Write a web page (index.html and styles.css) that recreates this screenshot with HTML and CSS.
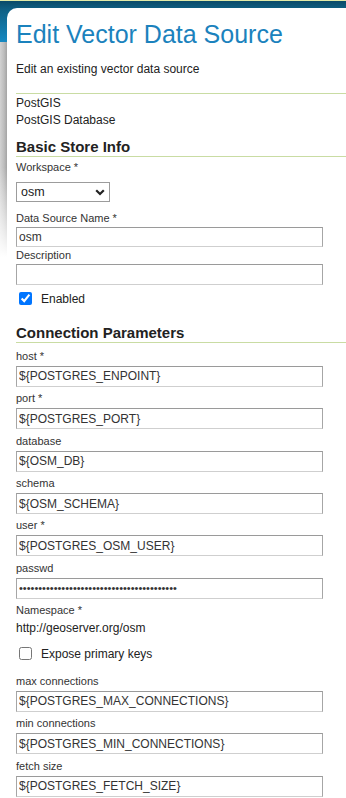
FILE: index.html
```html
<!DOCTYPE html>
<html lang="en">
<head>
<meta charset="utf-8">
<title>Edit Vector Data Source</title>
<link rel="stylesheet" href="styles.css">
</head>
<body>
<main class="panel">
  <h1 class="title">Edit Vector Data Source</h1>
  <p class="subtitle">Edit an existing vector data source</p>
  <div class="store-type">
    <div>PostGIS</div>
    <div>PostGIS Database</div>
  </div>

  <section class="group">
    <h2 class="group-title">Basic Store Info</h2>
    <label class="label label-first" for="ws">Workspace *</label>
    <div class="select-wrap">
      <select id="ws" class="select"><option>osm</option></select>
      <svg class="chevron" width="10" height="7" viewBox="0 0 10 7"><path d="M1.2 1.2 L5 5 L8.8 1.2" fill="none" stroke="#222" stroke-width="2.2"/></svg>
    </div>
    <label class="label label-dsn" for="dsn">Data Source Name *</label>
    <input id="dsn" class="text text-dsn" type="text" value="osm">
    <label class="label label-desc" for="desc">Description</label>
    <input id="desc" class="text text-desc" type="text" value="">
    <div class="check-row check-enabled">
      <input id="enabled" class="check" type="checkbox" checked>
      <label for="enabled" class="check-label">Enabled</label>
    </div>
  </section>

  <section class="group">
    <h2 class="group-title group-title-conn">Connection Parameters</h2>
    <div class="field field-first">
      <label class="label" for="host">host *</label>
      <input id="host" class="text" type="text" value="${POSTGRES_ENPOINT}">
    </div>
    <div class="field">
      <label class="label" for="port">port *</label>
      <input id="port" class="text" type="text" value="${POSTGRES_PORT}">
    </div>
    <div class="field">
      <label class="label" for="db">database</label>
      <input id="db" class="text" type="text" value="${OSM_DB}">
    </div>
    <div class="field">
      <label class="label" for="schema">schema</label>
      <input id="schema" class="text" type="text" value="${OSM_SCHEMA}">
    </div>
    <div class="field">
      <label class="label" for="user">user *</label>
      <input id="user" class="text" type="text" value="${POSTGRES_OSM_USER}">
    </div>
    <div class="field">
      <label class="label" for="pw">passwd</label>
      <input id="pw" class="text text-pw" type="password" value="00000000000000000000000000000000000000000">
    </div>
    <div class="field">
      <div class="label">Namespace *</div>
      <div class="ns-value">http://geoserver.org/osm</div>
    </div>
    <div class="check-row check-expose">
      <input id="expose" class="check" type="checkbox">
      <label for="expose" class="check-label">Expose primary keys</label>
    </div>
    <div class="field field-after-check">
      <label class="label" for="maxc">max connections</label>
      <input id="maxc" class="text" type="text" value="${POSTGRES_MAX_CONNECTIONS}">
    </div>
    <div class="field">
      <label class="label" for="minc">min connections</label>
      <input id="minc" class="text" type="text" value="${POSTGRES_MIN_CONNECTIONS}">
    </div>
    <div class="field">
      <label class="label" for="fetch">fetch size</label>
      <input id="fetch" class="text" type="text" value="${POSTGRES_FETCH_SIZE}">
    </div>
  </section>
</main>
</body>
</html>
```
FILE: styles.css
```css
html, body {
  margin: 0;
  padding: 0;
}

body {
  font-family: "Liberation Sans", Arial, sans-serif;
  color: #222;
  background-color: #fff;
  background-image:
    linear-gradient(to bottom, rgba(255,255,255,0) 0, rgba(255,255,255,0) 125px, #fff 215px),
    linear-gradient(to right, #d2d2d2 0, #bdbdbd 4px, #a4a4a4 7px),
    linear-gradient(to bottom, #e2eaa8 0, #e2eaa8 1px, #0a4a68 1px, #0f5f83 9px, #1689c2 42px);
  background-position: 0 42px, 0 42px, 0 0;
  background-size: 7px 220px, 7px 220px, 100% 42px;
  background-repeat: no-repeat;
  min-height: 798px;
}

.panel {
  display: block;
  margin: 8px 0 0 7px;
  padding: 11px 0 40px 9px;
  background: #fff;
  border-top-left-radius: 10px;
}

.title {
  margin: 0;
  font-size: 25px;
  line-height: 30px;
  font-weight: normal;
  color: #1b82bd;
  white-space: nowrap;
}

.subtitle {
  margin: 12.7px 0 0 0;
  font-size: 12px;
  line-height: 15px;
  padding-bottom: 16.3px;
  border-bottom: 1px solid #c9dca3;
}

.store-type {
  margin-top: 0.6px;
  font-size: 12px;
  line-height: 17px;
}

.group-title {
  margin: 9.5px 0 0 0;
  font-size: 15px;
  line-height: 18px;
  font-weight: bold;
  color: #222;
  border-bottom: 1px solid #c9dca3;
}

.group-title-conn {
  margin-top: 18.8px;
}

.label {
  display: block;
  font-size: 11px;
  line-height: 14px;
  color: #333;
}

.label-first {
  margin-top: 2.8px;
}

.label-dsn {
  margin-top: 8.9px;
}

.label-desc {
  margin-top: 1.2px;
}

.select-wrap {
  position: relative;
  width: 94px;
  height: 20px;
  margin-top: 8.1px;
}

.select {
  appearance: none;
  -webkit-appearance: none;
  box-sizing: border-box;
  display: block;
  width: 94px;
  height: 20px;
  margin: 0;
  padding: 0 0 0 4px;
  border: 1px solid #9c9c9c;
  border-radius: 0;
  background: #fff;
  font-family: "Liberation Sans", Arial, sans-serif;
  font-size: 12.5px;
  color: #222;
}

.chevron {
  position: absolute;
  right: 5px;
  top: 7px;
}

.text {
  box-sizing: border-box;
  display: block;
  width: 307px;
  height: 21px;
  margin: 3px 0 0 0;
  padding: 0 2px;
  border: 1px solid #a6a6a6;
  border-top-color: #9a9a9a;
  border-bottom-color: #cfcfcf;
  border-radius: 0;
  background: #fff;
  font-family: "Liberation Sans", Arial, sans-serif;
  font-size: 12px;
  color: #333;
  outline: none;
}

.text-pw {
  font-size: 11px;
}

.text-dsn {
  margin-top: 2.1px;
  height: 20px;
}

.text-desc {
  margin-top: 1.8px;
}

.check-row {
  display: flex;
  align-items: center;
  height: 13px;
}

.check-enabled {
  margin-top: 7px;
}

.check-expose {
  margin-top: 11.3px;
}

.check {
  width: 13px;
  height: 13px;
  margin: 0 0 0 3px;
  flex: none;
}

.check-label {
  margin-left: 9px;
  padding-top: 2px;
  font-size: 12px;
  line-height: 15px;
  color: #222;
}

.field {
  margin-top: 4.4px;
}

.field-first {
  margin-top: 6.2px;
}

.field-after-check {
  margin-top: 13.9px;
}

.ns-value {
  margin-top: 3.3px;
  font-size: 12px;
  line-height: 15px;
  color: #222;
}
```
